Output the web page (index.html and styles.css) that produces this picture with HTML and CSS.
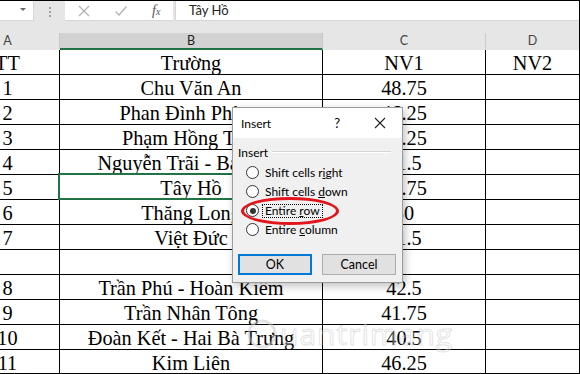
FILE: index.html
```html
<!DOCTYPE html>
<html lang="vi">
<head>
  <meta charset="UTF-8">
  <meta name="viewport" content="width=device-width, initial-scale=1.0">
  <title>Insert - Excel</title>
  <link rel="stylesheet" href="styles.css">
</head>
<body>

<div class="window">
  <!-- Formula bar -->
  <div class="formula-bar">
    <div class="name-box"><span class="drop"></span></div>
    <div class="grip"><i></i><i></i><i></i></div>
    <div class="fx-icons">
      <svg class="ico" width="14" height="14" viewBox="0 0 14 14"><path d="M2 2 L12 12 M12 2 L2 12" stroke="#b3b3b3" stroke-width="1.3" fill="none"/></svg>
      <svg class="ico" width="14" height="14" viewBox="0 0 14 14"><path d="M1.5 7.5 L5 11 L12.5 2.5" stroke="#b3b3b3" stroke-width="1.3" fill="none"/></svg>
      <span class="fx">f<small>x</small></span>
    </div>
    <div class="formula">Tây Hồ</div>
  </div>

  <!-- Column headers -->
  <div class="col-heads">
    <div class="ch"><span class="col-a">A</span></div>
    <div class="ch active">B</div>
    <div class="ch">C</div>
    <div class="ch last">D</div>
  </div>

  <!-- Sheet -->
  <div class="sheet">
    <div class="cell"><span class="col-a">TT</span></div><div class="cell">Trường</div><div class="cell">NV1</div><div class="cell last">NV2</div>
    <div class="cell"><span class="col-a">1</span></div><div class="cell">Chu Văn An</div><div class="cell">48.75</div><div class="cell last"></div>
    <div class="cell"><span class="col-a">2</span></div><div class="cell">Phan Đình Phùng</div><div class="cell">46.25</div><div class="cell last"></div>
    <div class="cell"><span class="col-a">3</span></div><div class="cell">Phạm Hồng Thái</div><div class="cell">45.25</div><div class="cell last"></div>
    <div class="cell"><span class="col-a">4</span></div><div class="cell">Nguyễn Trãi - Ba Đình</div><div class="cell">41.5</div><div class="cell last"></div>
    <div class="cell"><span class="col-a">5</span></div><div class="cell selected">Tây Hồ</div><div class="cell">44.75</div><div class="cell last"></div>
    <div class="cell"><span class="col-a">6</span></div><div class="cell">Thăng Long</div><div class="cell">50</div><div class="cell last"></div>
    <div class="cell"><span class="col-a">7</span></div><div class="cell">Việt Đức</div><div class="cell">41.5</div><div class="cell last"></div>
    <div class="cell"></div><div class="cell"></div><div class="cell"></div><div class="cell last"></div>
    <div class="cell"><span class="col-a">8</span></div><div class="cell">Trần Phú - Hoàn Kiếm</div><div class="cell">42.5</div><div class="cell last"></div>
    <div class="cell"><span class="col-a">9</span></div><div class="cell">Trần Nhân Tông</div><div class="cell">41.75</div><div class="cell last"></div>
    <div class="cell"><span class="col-a">10</span></div><div class="cell">Đoàn Kết - Hai Bà Trưng</div><div class="cell">40.5</div><div class="cell last"></div>
    <div class="cell"><span class="col-a">11</span></div><div class="cell">Kim Liên</div><div class="cell">46.25</div><div class="cell last"></div>
  </div>

  <!-- watermark -->
  <div class="watermark">
    <svg width="32" height="32" viewBox="0 0 32 32"><circle cx="16" cy="16" r="13" stroke="#c8c8c8" stroke-width="3" fill="none" opacity="0.5"/></svg>
    <span>uantrimang</span>
  </div>

  <!-- Insert dialog -->
  <div class="dialog">
    <div class="dlg-title">
      <span class="dlg-name">Insert</span>
      <span class="help">?</span>
      <svg class="close" width="12" height="12" viewBox="0 0 12 12"><path d="M1 1 L11 11 M11 1 L1 11" stroke="#222" stroke-width="1.1" fill="none"/></svg>
    </div>
    <div class="dlg-body">
      <div class="group-head"><span>Insert</span><i></i></div>
      <ul class="options">
        <li><span class="radio"></span><span class="opt">Shift cells r<u>i</u>ght</span></li>
        <li><span class="radio"></span><span class="opt">Shift cells <u>d</u>own</span></li>
        <li class="checked"><span class="radio"></span><span class="opt focus">Entire <u>r</u>ow</span></li>
        <li><span class="radio"></span><span class="opt">Entire <u>c</u>olumn</span></li>
      </ul>
      <div class="buttons">
        <button class="btn ok">OK</button>
        <button class="btn">Cancel</button>
      </div>
    </div>
    <span class="mark"></span>
  </div>
</div>

</body>
</html>
```

FILE: styles.css
```css
body {
  margin: 0;
  background: #fff;
}
.window {
  position: relative;
  width: 580px;
  height: 374px;
  box-sizing: border-box;
  border: 1px solid #000;
  border-left: none;
  overflow: hidden;
  background: #fff;
  font-family: "Liberation Serif", "Times New Roman", serif;
}

/* formula bar */
.formula-bar {
  display: flex;
  align-items: flex-start;
  height: 32px;
  background: #e6e6e6;
  font-family: Lato, "Noto Sans", sans-serif;
}
.name-box {
  display: flex;
  justify-content: flex-end;
  width: 34px;
  height: 20px;
  padding: 7px 7px 0 0;
  box-sizing: border-box;
  background: #fff;
  border-bottom: 1px solid #d6d6d6;
  border-right: 1px solid #d6d6d6;
}
.drop {
  width: 0;
  height: 0;
  border-left: 3px solid transparent;
  border-right: 3px solid transparent;
  border-top: 3px solid #666;
}
.grip {
  display: flex;
  flex-direction: column;
  align-items: center;
  gap: 2px;
  width: 31px;
  padding-top: 6px;
}
.grip i {
  width: 2px;
  height: 2px;
  background: #a0a0a0;
}
.fx-icons {
  display: flex;
  align-items: center;
  width: 108px;
  height: 20px;
  padding-left: 12px;
  box-sizing: border-box;
  background: #fff;
  border-bottom: 1px solid #d6d6d6;
}
.ico {
  margin-right: 23px;
}
.fx-icons .ico + .ico {
  margin-right: 24px;
}
.fx {
  font-family: "Liberation Serif", serif;
  font-style: italic;
  font-size: 14px;
  color: #555;
}
.fx small {
  font-size: 10px;
}
.formula {
  flex: 1;
  height: 20px;
  margin-left: 2px;
  padding-left: 13px;
  box-sizing: border-box;
  background: #fff;
  border-left: 1px solid #d6d6d6;
  border-bottom: 1px solid #d6d6d6;
  font-size: 13px;
  line-height: 19px;
  color: #222;
}

/* column headers */
.col-heads {
  display: grid;
  grid-template-columns: 60px 263px 163px 93px;
  height: 17px;
  background: #e6e6e6;
  font-family: Lato, "Noto Sans", sans-serif;
  font-size: 12.5px;
  color: #444;
}
.ch {
  box-sizing: border-box;
  text-align: center;
  line-height: 15px;
  border-right: 1px solid #c9c9c9;
  border-bottom: 2px solid #e6e6e6;
}
.ch.active {
  background: #d2d2d2;
  border-bottom-color: #217346;
  color: #222;
}
.ch.last {
  border-right: none;
}
.col-a {
  display: block;
  width: 103px;
  margin-left: -44px;
  text-align: center;
}

/* sheet */
.sheet {
  display: grid;
  grid-template-columns: 60px 263px 163px 93px;
  grid-auto-rows: 25px;
  font-size: 20.3px;
  color: #000;
}
.cell {
  position: relative;
  box-sizing: border-box;
  padding-top: 1px;
  line-height: 24px;
  text-align: center;
  white-space: nowrap;
  border-right: 1px solid #000;
  border-bottom: 1px solid #000;
}
.cell.last {
  border-right: none;
}
.cell.selected::after {
  content: "";
  position: absolute;
  left: -2px;
  top: -2px;
  right: -1px;
  bottom: -1px;
  border: 2px solid #217346;
}

/* watermark */
.watermark {
  position: absolute;
  left: 246px;
  top: 312px;
  display: flex;
  align-items: center;
  gap: 2px;
  font-family: "Open Sans", sans-serif;
  font-size: 30px;
  color: rgba(255, 255, 255, 0.3);
  -webkit-text-stroke: 1px rgba(170, 170, 170, 0.35);
  letter-spacing: 1px;
}

/* dialog */
.dialog {
  position: absolute;
  left: 232px;
  top: 106px;
  width: 171px;
  height: 176px;
  box-sizing: border-box;
  background: #f0f0f0;
  border: 1px solid #9c9c9c;
  box-shadow: 2px 3px 8px rgba(0, 0, 0, 0.25);
  font-family: Lato, "Noto Sans", sans-serif;
  font-size: 12px;
  color: #000;
}
.dlg-title {
  display: flex;
  align-items: center;
  height: 30px;
  padding-left: 8px;
  background: #fff;
}
.dlg-name {
  flex: 1;
}
.help {
  margin-right: 34px;
  font-size: 13px;
}
.close {
  margin-right: 16px;
}
.dlg-body {
  padding: 7px 5px 0 5px;
}
.group-head {
  display: flex;
  align-items: center;
  height: 14px;
  padding-right: 6px;
}
.group-head i {
  flex: 1;
  height: 1px;
  margin-left: 4px;
  background: #d5d5d5;
  border-bottom: 1px solid #fff;
}
.options {
  list-style: none;
  margin: 4px 0 0 0;
  padding: 0;
}
.options li {
  display: flex;
  align-items: center;
  height: 19px;
  padding-left: 8px;
}
.radio {
  position: relative;
  width: 13px;
  height: 13px;
  box-sizing: border-box;
  border: 1px solid #333;
  border-radius: 50%;
  background: #fff;
}
.checked .radio::after {
  content: "";
  position: absolute;
  left: 2.5px;
  top: 2.5px;
  width: 6px;
  height: 6px;
  border-radius: 50%;
  background: #333;
}
.opt {
  margin-left: 3px;
  padding: 0 2px;
  line-height: 12px;
  border: 1px dotted transparent;
}
.opt.focus {
  border-color: #000;
}
.buttons {
  display: flex;
  gap: 10px;
  margin-top: 15px;
}
.btn {
  width: 74px;
  height: 21px;
  padding: 0;
  box-sizing: border-box;
  background: #e1e1e1;
  border: 1px solid #adadad;
  font-family: Lato, "Noto Sans", sans-serif;
  font-size: 12.5px;
  color: #000;
}
.btn.ok {
  border: 2px solid #0078d7;
}
.mark {
  position: absolute;
  left: 8px;
  top: 89px;
  width: 98px;
  height: 28px;
  box-sizing: border-box;
  border: 3px solid #e3151c;
  border-radius: 50%;
}
```
